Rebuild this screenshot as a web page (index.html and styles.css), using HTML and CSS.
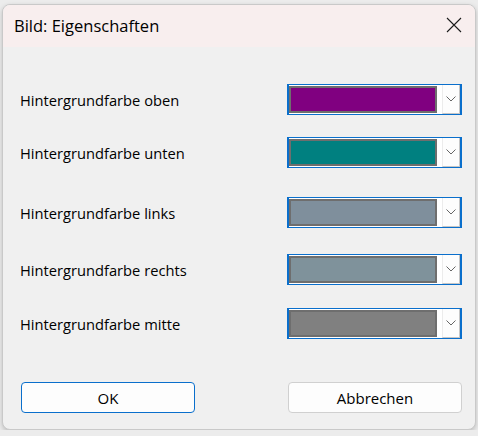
FILE: index.html
```html
<!doctype html>
<html lang="de">
<head>
  <meta charset="UTF-8">
  <meta name="viewport" content="width=device-width, initial-scale=1">
  <title>Bild: Eigenschaften</title>
  <link rel="stylesheet" href="styles.css">
</head>
<body>
  <div class="dialog">
    <div class="titlebar">
      <span class="title">Bild: Eigenschaften</span>
      <button class="close" aria-label="Schließen">
        <svg width="16" height="16" viewBox="0 0 16 16">
          <path d="M1 1 L15 15 M15 1 L1 15" stroke="#1b1b1b" stroke-width="1.1" fill="none"/>
        </svg>
      </button>
    </div>
    <div class="content">
      <div class="rows">
        <div class="row">
          <label class="row-label">Hintergrundfarbe oben</label>
          <div class="combo">
            <span class="swatch" style="background:#800080"></span>
            <span class="drop"><svg width="10" height="6" viewBox="0 0 10 6"><polyline points="0.5,0.5 5,5 9.5,0.5" stroke="#666" fill="none"/></svg></span>
          </div>
        </div>
        <div class="row">
          <label class="row-label">Hintergrundfarbe unten</label>
          <div class="combo">
            <span class="swatch" style="background:#008080"></span>
            <span class="drop"><svg width="10" height="6" viewBox="0 0 10 6"><polyline points="0.5,0.5 5,5 9.5,0.5" stroke="#666" fill="none"/></svg></span>
          </div>
        </div>
        <div class="row">
          <label class="row-label">Hintergrundfarbe links</label>
          <div class="combo">
            <span class="swatch" style="background:#7f8f9c"></span>
            <span class="drop"><svg width="10" height="6" viewBox="0 0 10 6"><polyline points="0.5,0.5 5,5 9.5,0.5" stroke="#666" fill="none"/></svg></span>
          </div>
        </div>
        <div class="row">
          <label class="row-label">Hintergrundfarbe rechts</label>
          <div class="combo">
            <span class="swatch" style="background:#7f929b"></span>
            <span class="drop"><svg width="10" height="6" viewBox="0 0 10 6"><polyline points="0.5,0.5 5,5 9.5,0.5" stroke="#666" fill="none"/></svg></span>
          </div>
        </div>
        <div class="row">
          <label class="row-label">Hintergrundfarbe mitte</label>
          <div class="combo">
            <span class="swatch" style="background:#808080"></span>
            <span class="drop"><svg width="10" height="6" viewBox="0 0 10 6"><polyline points="0.5,0.5 5,5 9.5,0.5" stroke="#666" fill="none"/></svg></span>
          </div>
        </div>
      </div>
      <div class="actions">
        <button class="btn btn-default">OK</button>
        <button class="btn">Abbrechen</button>
      </div>
    </div>
  </div>
</body>
</html>
```

FILE: styles.css
```css
body {
  margin: 0;
  padding: 4px 2px 0;
  background-color: #ececec;
  font-family: 'Open Sans', 'Noto Sans', Arial, sans-serif;
  color: #000;
}

.dialog {
  width: 474px;
  height: 426px;
  box-sizing: border-box;
  border: 1px solid #c9c9c9;
  border-radius: 8px;
  background-color: #f0f0f0;
  box-shadow: 0 2px 5px rgba(0,0,0,0.2);
  overflow: hidden;
  display: flex;
  flex-direction: column;
}

.titlebar {
  height: 42px;
  flex: none;
  display: flex;
  align-items: center;
  justify-content: space-between;
  padding: 0 13px 0 11px;
  background-color: #f8eeee;
}

.title {
  font-size: 16.5px;
  padding-bottom: 2px;
}

.close {
  border: none;
  background: none;
  padding: 0;
  width: 16px;
  height: 16px;
  margin-bottom: 2px;
}

.close svg {
  display: block;
}

.content {
  flex: 1;
  display: flex;
  flex-direction: column;
  padding: 37px 13px 16px 17px;
}

.rows {
  display: flex;
  flex-direction: column;
  gap: 22px;
}

.row:nth-child(3) {
  margin-top: 7px;
}

.row:nth-child(4) {
  margin-top: 4px;
}

.row:nth-child(5) {
  margin-top: 1px;
}

.row {
  display: flex;
  align-items: center;
  justify-content: space-between;
  height: 31px;
}

.row-label {
  font-size: 14.7px;
  padding-top: 1px;
}

.combo {
  width: 175px;
  height: 31px;
  box-sizing: border-box;
  border: solid #0a6fcc;
  border-width: 1px 2px;
  background-color: #fff;
  display: flex;
}

.swatch {
  width: 148px;
  margin: 1px 0;
  box-sizing: border-box;
  border: 2px solid #6e6e6e;
}

.drop {
  margin-left: 5px;
  width: 18px;
  box-sizing: border-box;
  border-left: 1px solid #ececec;
  border-right: 1px solid #c6c6c6;
  border-bottom: 1px solid #c6c6c6;
  background-color: #fdfdfd;
  display: flex;
  align-items: center;
  justify-content: center;
}

.drop svg {
  display: block;
}

.actions {
  margin-top: auto;
  display: flex;
  justify-content: space-between;
  padding-left: 1px;
}

.btn {
  width: 174px;
  height: 31px;
  border: 1px solid #d0d0d0;
  border-radius: 4px;
  background-color: #fdfdfd;
  font-family: inherit;
  font-size: 15px;
  color: #000;
  padding: 0;
}

.btn-default {
  border-color: #0a6fcc;
}
```
